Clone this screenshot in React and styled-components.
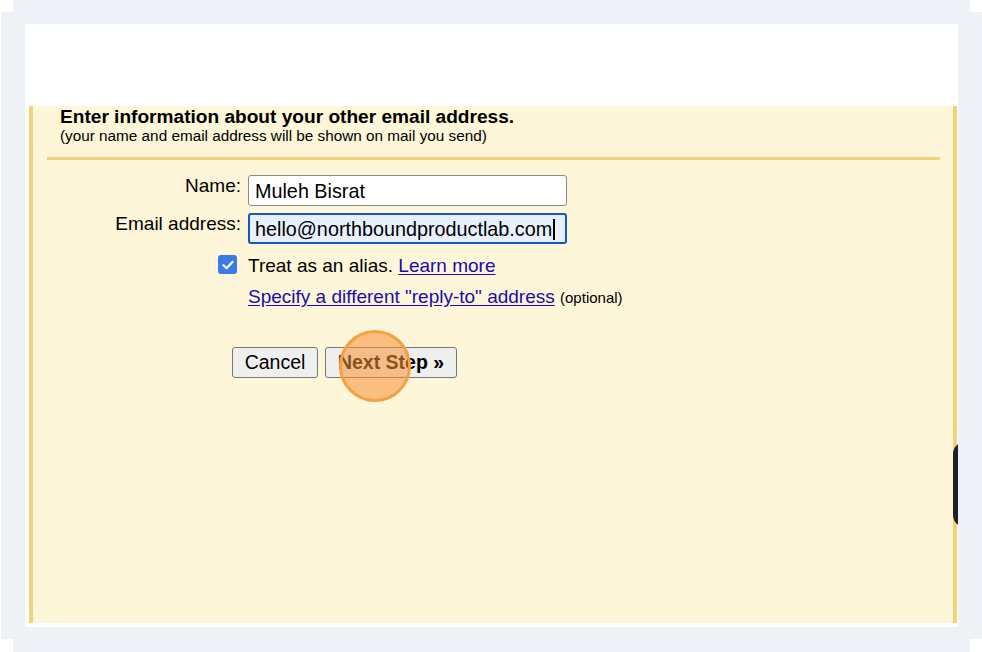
import React from 'react';
import styled, { createGlobalStyle } from 'styled-components';

const GlobalStyle = createGlobalStyle`
  html, body {
    margin: 0;
    padding: 0;
    background: #ffffff;
    font-family: "Liberation Sans", Arial, sans-serif;
  }
`;

const Backdrop = styled.div`
  margin: 0 12px 0 13px;
  height: 652px;
  padding-top: 12px;
  box-sizing: border-box;
  background: #eef2f7;
`;

const Frame = styled.div`
  margin: 0 -12px 0 -12px;
  height: 627px;
  padding: 12px 24px;
  box-sizing: border-box;
  background: #eef2f7;
`;

const Card = styled.div`
  position: relative;
  height: 100%;
  background: #ffffff;
  padding: 82px 1px 4px 4px;
  box-sizing: border-box;
  overflow: hidden;
`;

const Panel = styled.div`
  height: 100%;
  background: #fdf6d8;
  border-left: 4px solid #f1d37b;
  border-right: 4px solid #f1d37b;
  box-sizing: border-box;
`;

const Header = styled.div`
  padding: 0 0 0 27px;
`;

const Title = styled.div`
  font-size: 19.1px;
  font-weight: bold;
  color: #000;
  line-height: 21px;
`;

const Subtitle = styled.div`
  font-size: 15.3px;
  color: #000;
  line-height: 18px;
`;

const Divider = styled.div`
  height: 3px;
  background: #f1d37b;
  margin: 12px 13px 0 14px;
`;

const Form = styled.div`
  display: grid;
  grid-template-columns: 208px 1fr;
  column-gap: 7px;
  row-gap: 7px;
  padding-top: 15px;
`;

const Label = styled.div`
  text-align: right;
  font-size: 19px;
  line-height: 22px;
  color: #000;
`;

const Input = styled.div`
  width: 319px;
  height: 31px;
  box-sizing: border-box;
  border: ${(p) => (p.$focused ? '2px solid #1b55c0' : '1px solid #8a8a8a')};
  border-radius: 3px;
  background: ${(p) => (p.$focused ? '#e8f0fe' : '#ffffff')};
  font-size: 19.8px;
  padding: 1px 0 0 ${(p) => (p.$focused ? '5px' : '6px')};
  color: #000;
  white-space: nowrap;
  display: flex;
  align-items: center;
`;

const Caret = styled.span`
  display: inline-block;
  width: 1.5px;
  height: 21px;
  background: #000;
  margin-left: 1px;
`;

const CheckCell = styled.div`
  display: flex;
  justify-content: flex-end;
  padding: 4px 4px 0 0;
`;

const Checkbox = styled.span`
  width: 19px;
  height: 19px;
  border-radius: 3px;
  background: #3b7be6;
  display: flex;
  align-items: center;
  justify-content: center;
`;

const Line = styled.div`
  font-size: 19px;
  line-height: 22px;
  color: #000;
  padding-top: ${(p) => p.$top || 0}px;
`;

const Link = styled.a`
  color: #1a0dab;
  text-decoration: underline;
  text-underline-offset: 2px;
  cursor: pointer;
`;

const Small = styled.span`
  font-size: 15px;
`;

const Buttons = styled.div`
  display: flex;
  gap: 7px;
  padding: 38px 0 0 199px;
`;

const Button = styled.button`
  position: relative;
  height: 31px;
  width: ${(p) => p.$w}px;
  box-sizing: border-box;
  border: 1px solid #767676;
  border-radius: 3px;
  background: #efefef;
  font-family: "Liberation Sans", Arial, sans-serif;
  font-size: 19.5px;
  font-weight: ${(p) => (p.$bold ? 'bold' : 'normal')};
  color: #000;
  padding: 0;
`;

const ClickMarker = styled.span`
  position: absolute;
  left: 13px;
  top: -18px;
  width: 72px;
  height: 72px;
  box-sizing: border-box;
  border-radius: 50%;
  border: 3px solid #f6a044;
  background: rgba(248, 146, 52, 0.55);
  pointer-events: none;
`;

const EdgeTab = styled.div`
  position: absolute;
  top: 418px;
  left: 928px;
  width: 40px;
  height: 85px;
  border-radius: 12px;
  background: #1e2125;
`;

export default function App() {
  return (
    <>
      <GlobalStyle />
      <Backdrop>
        <Frame>
          <Card>
            <Panel>
              <Header>
                <Title>Enter information about your other email address.</Title>
                <Subtitle>(your name and email address will be shown on mail you send)</Subtitle>
              </Header>
              <Divider />
              <Form>
                <Label>Name:</Label>
                <Input>Muleh Bisrat</Input>
                <Label>Email address:</Label>
                <Input $focused>
                  hello@northboundproductlab.com
                  <Caret />
                </Input>
                <CheckCell>
                  <Checkbox>
                    <svg width="14" height="14" viewBox="0 0 14 14">
                      <path d="M2.5 7.2 L5.6 10.2 L11.6 3.8" fill="none" stroke="#fff" strokeWidth="2.2" strokeLinecap="round" strokeLinejoin="round" />
                    </svg>
                  </Checkbox>
                </CheckCell>
                <Line $top={4}>
                  Treat as an alias. <Link>Learn more</Link>
                </Line>
                <div />
                <Line $top={2}>
                  <Link>Specify a different "reply-to" address</Link> <Small>(optional)</Small>
                </Line>
              </Form>
              <Buttons>
                <Button $w={86}>Cancel</Button>
                <Button $w={132} $bold>
                  Next Step »
                  <ClickMarker />
                </Button>
              </Buttons>
            </Panel>
            <EdgeTab />
          </Card>
        </Frame>
      </Backdrop>
    </>
  );
}
